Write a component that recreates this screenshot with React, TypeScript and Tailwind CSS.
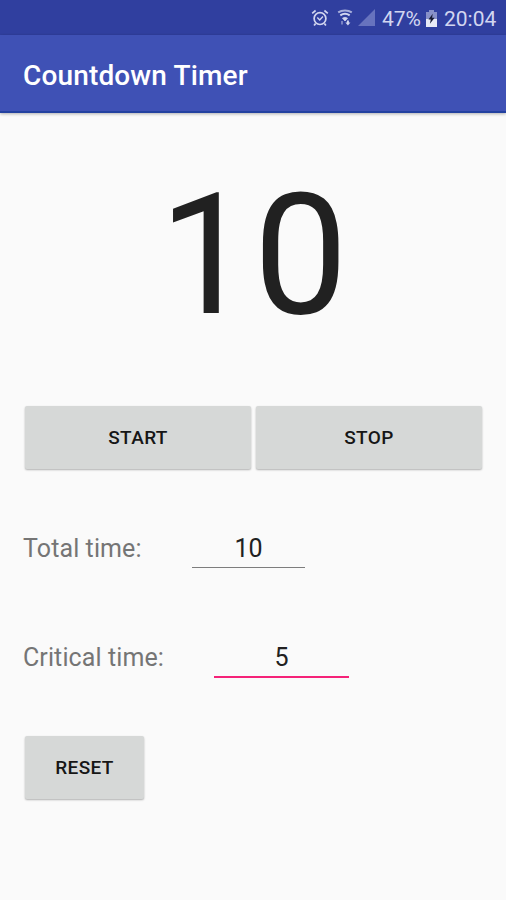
import React, { useState } from "react";

const AlarmIcon = () => (
  <svg className="h-[18px] w-[18px]" viewBox="0 0 18 18" fill="none" stroke="currentColor">
    <circle cx="9" cy="9.6" r="5.9" strokeWidth="1.7" />
    <path d="M1.2 4.4 4.6 1.5M16.8 4.4 13.4 1.5M4.6 14.4 3.1 16.5M13.4 14.4l1.5 2.1" strokeWidth="1.7" />
    <path d="M6.3 8.6 8.7 11l3.2-3.4" strokeWidth="1.4" />
  </svg>
);

const WifiIcon = () => (
  <svg className="h-[18px] w-[16px]" viewBox="0 0 16 18" fill="none" stroke="currentColor">
    <path d="M1.2 3.4C5 .9 11 .9 14.8 3.4" strokeWidth="2" opacity=".75" />
    <path d="M3.3 6.4c2.8-2 6.6-2 9.4 0" strokeWidth="2" />
    <path d="M5.5 9.2c1.5-1.1 3.5-1.1 5 0L8 12z" fill="currentColor" strokeWidth=".8" />
    <path d="M5 12v3.6" strokeWidth="2" opacity=".45" />
    <path d="M10.9 11.5v3" strokeWidth="2" />
    <path d="M8.4 13.6h5l-2.5 3z" fill="currentColor" stroke="none" />
  </svg>
);

const SignalIcon = () => (
  <svg className="h-[17px] w-[17px]" viewBox="0 0 17 17">
    <path d="M17 0v17H0z" fill="#6773be" />
  </svg>
);

const BatteryIcon = () => (
  <svg className="h-[17px] w-[11px]" viewBox="0 0 11 17">
    <path d="M3 0h5v2h3v7H0V2h3z" fill="#8790c8" />
    <path d="M0 9h11v8H0z" fill="#e8eaf6" />
    <path d="M6.7 3.8 2.5 9.4h2.3l-.9 4.3 4.7-6H6.1z" fill="#171b35" />
  </svg>
);

const buttonClass =
  "h-[63px] rounded-[2px] bg-[#d6d8d7] pt-[2px] text-[19px] font-medium tracking-[0.4px] text-[#161616] shadow-[0_1px_2px_rgba(0,0,0,0.3)]";

const App: React.FC = () => {
  const [total, setTotal] = useState("10");
  const [critical, setCritical] = useState("5");

  return (
    <div className="h-[900px] w-[506px] overflow-hidden bg-[#fafafa] font-['Roboto',sans-serif]">
      <div className="flex h-[35px] items-center bg-[#303f9f] pt-[3px] pl-[311px] text-[21px] text-[#d2d6f0]">
        <span className="flex pb-[3px]"><AlarmIcon /></span>
        <span className="ml-[8px] flex pb-[3px]"><WifiIcon /></span>
        <span className="ml-[5px] flex pb-[3px]"><SignalIcon /></span>
        <span className="ml-[7px] w-[40px] whitespace-nowrap pt-px">47%</span>
        <span className="ml-[4px] flex pb-[2px]"><BatteryIcon /></span>
        <span className="ml-[7px] pt-px">20:04</span>
      </div>
      <header className="flex h-[78px] items-center border-b-2 border-[#2341a0] bg-[#3f51b5] pl-[23px] pt-[5px] shadow-[0_1px_3px_rgba(0,0,0,0.3)]">
        <h1 className="text-[28px] font-medium tracking-[0.15px] text-white">Countdown Timer</h1>
      </header>

      <main className="pl-[25px] pr-[24px]">
        <div className="flex h-[293px] items-center justify-center pb-[8px] text-[168px] leading-none text-[#212121]">
          {total}
        </div>

        <div className="flex gap-[5px]">
          <button className={`${buttonClass} w-[226px]`}>START</button>
          <button className={`${buttonClass} w-[226px]`}>STOP</button>
        </div>

        <div className="-ml-[2px] mt-[60px] flex h-[39px] text-[25px] leading-[39px]">
          <label htmlFor="total" className="w-[169px] tracking-[0.1px] text-[#757575]">Total time:</label>
          <input
            id="total"
            className="w-[113px] border-b border-[#7d7d7d] text-center text-[#212121] outline-none"
            value={total}
            onChange={(e) => setTotal(e.target.value)}
          />
        </div>

        <div className="-ml-[2px] mt-[70px] flex h-[40px] text-[25px] leading-[40px]">
          <label htmlFor="critical" className="w-[191px] tracking-[0.1px] text-[#757575]">Critical time:</label>
          <input
            id="critical"
            className="w-[135px] border-b-2 border-[#f52278] pt-[2px] text-center text-[#212121] outline-none"
            value={critical}
            onChange={(e) => setCritical(e.target.value)}
          />
        </div>

        <button className={`${buttonClass} mt-[58px] w-[119px]`}>RESET</button>
      </main>
    </div>
  );
};

export default App;
